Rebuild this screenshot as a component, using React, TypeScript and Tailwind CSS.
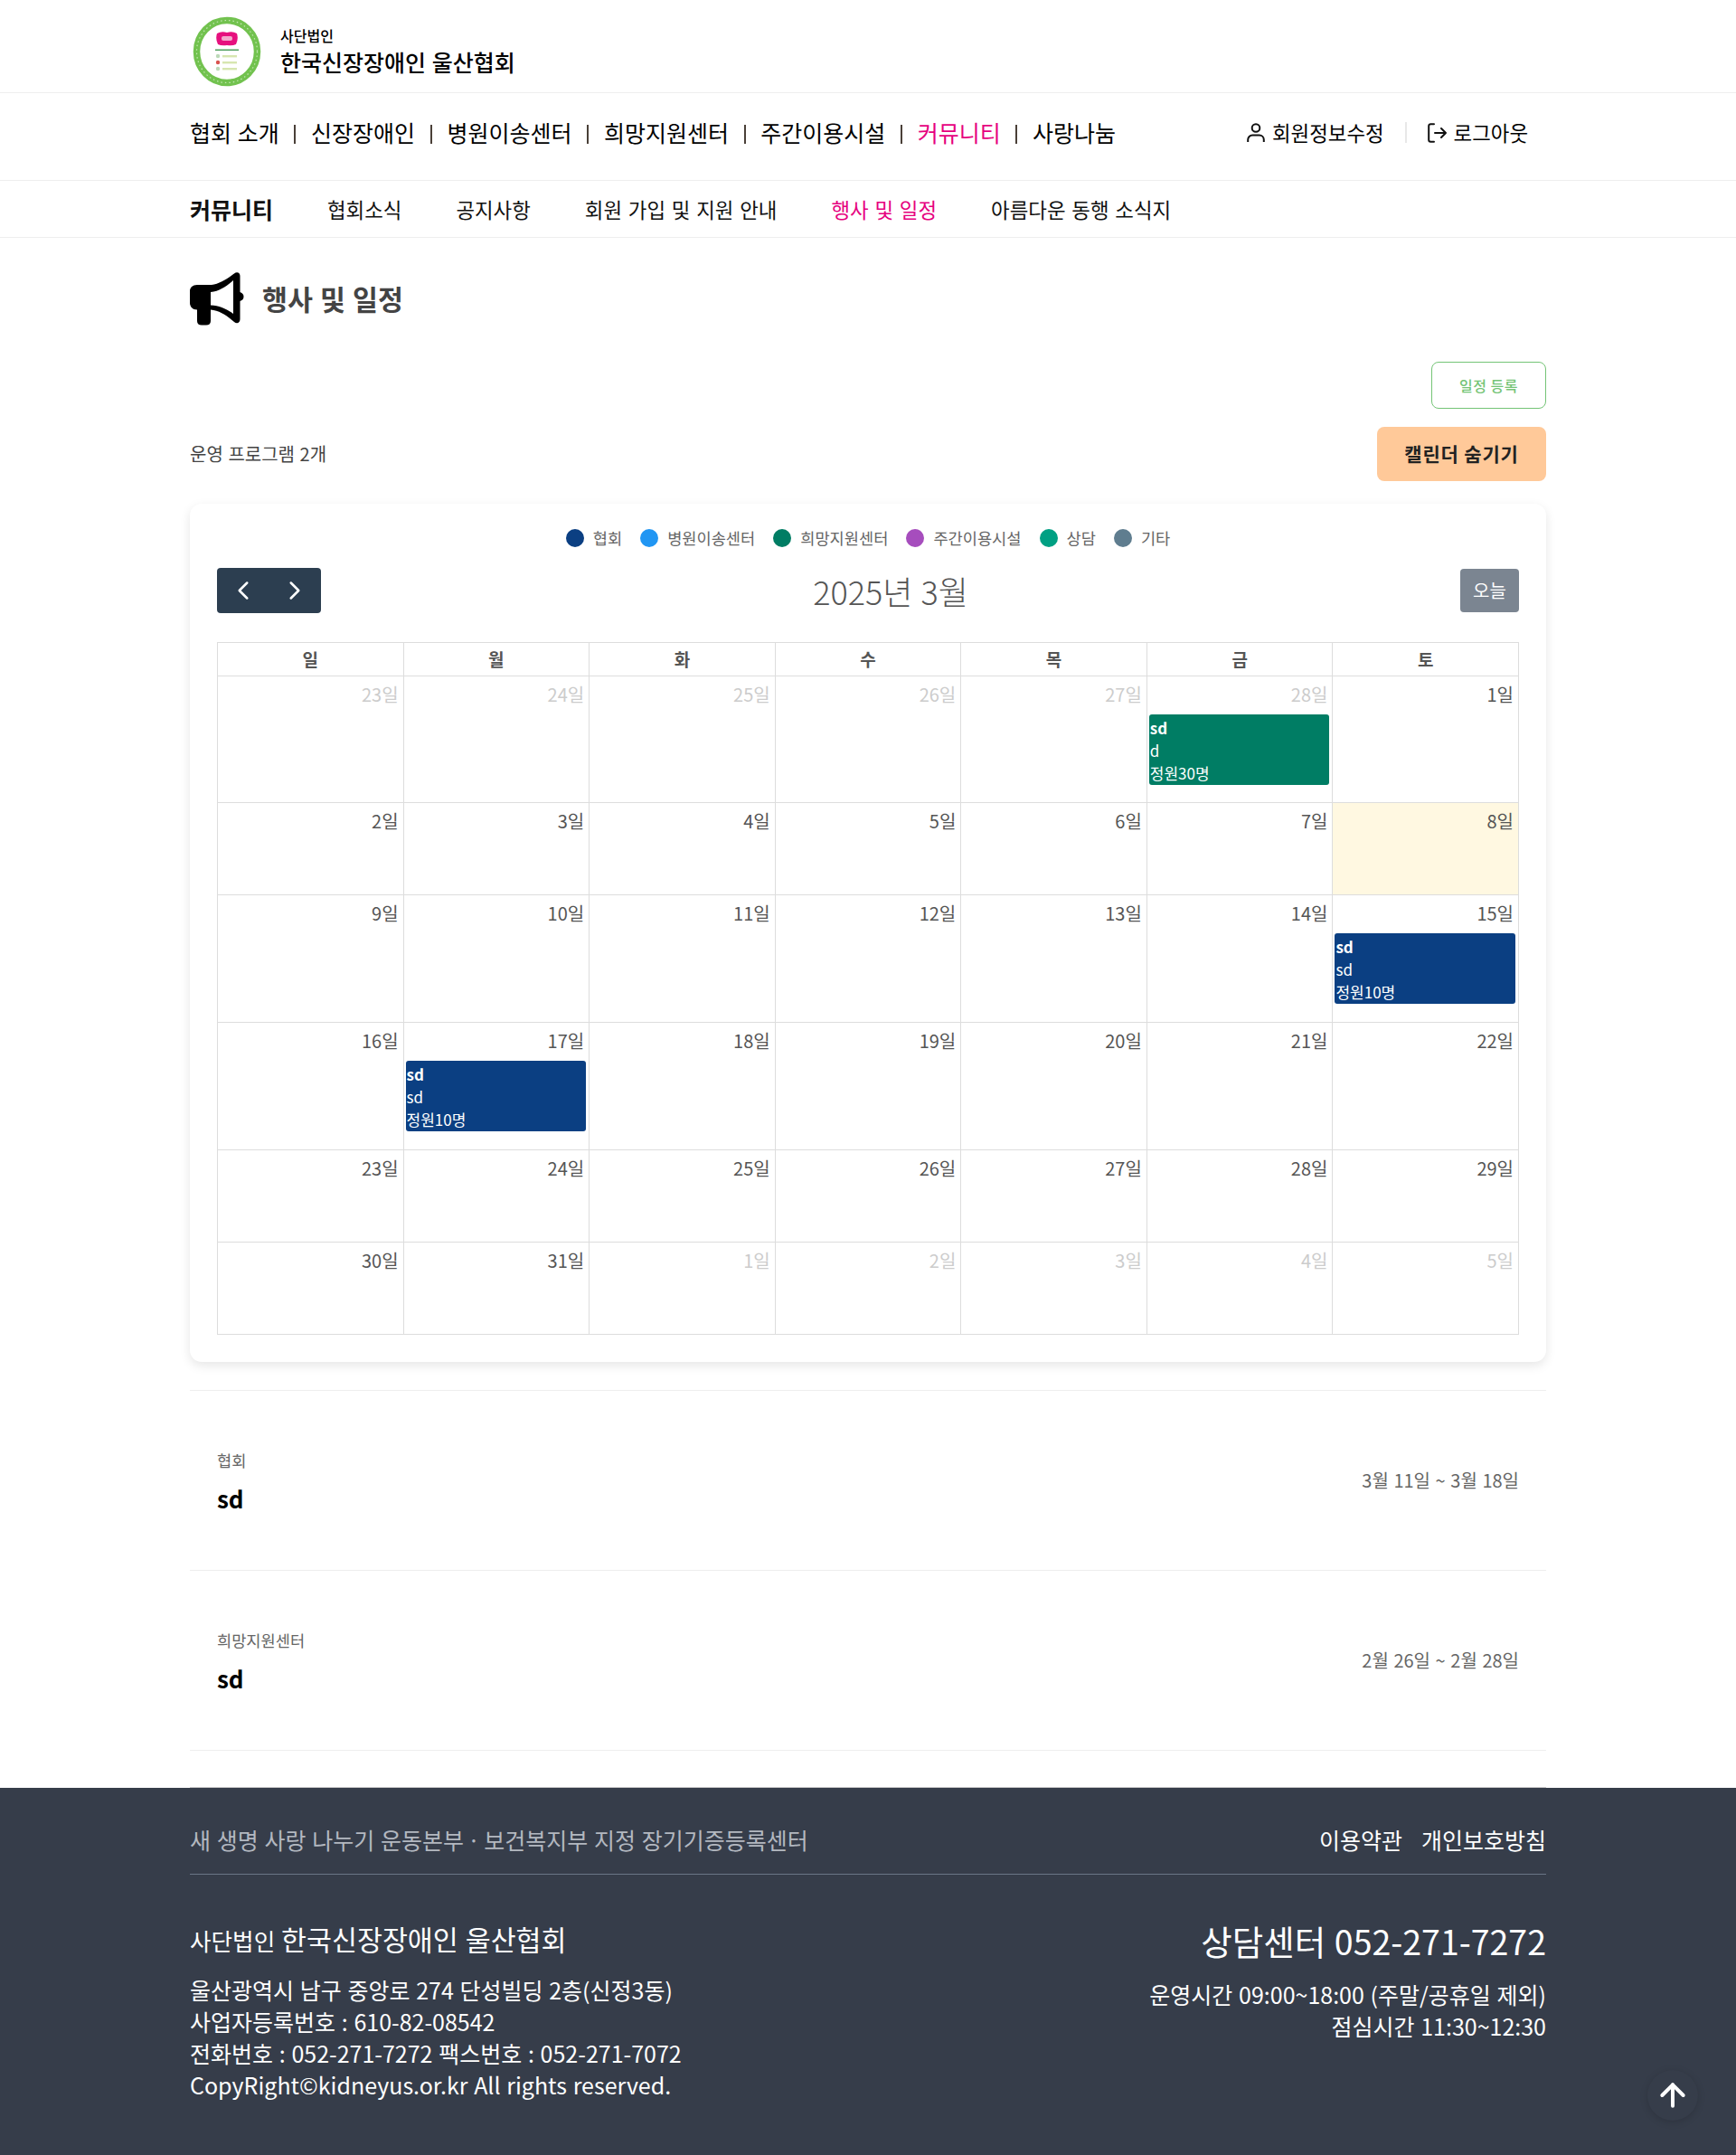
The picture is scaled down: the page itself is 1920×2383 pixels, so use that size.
import React from "react";
import { ChevronLeft, ChevronRight, ArrowUp } from "lucide-react";

const F = { fontFamily: '"Noto Sans CJK KR", "Noto Sans", sans-serif' };

const nav = ["협회 소개", "신장장애인", "병원이송센터", "희망지원센터", "주간이용시설", "커뮤니티", "사랑나눔"];
const sub = ["협회소식", "공지사항", "회원 가입 및 지원 안내", "행사 및 일정", "아름다운 동행 소식지"];
const legend: [string, string][] = [
  ["협회", "bg-[#0b3f82]"],
  ["병원이송센터", "bg-[#2196f3]"],
  ["희망지원센터", "bg-[#007d64]"],
  ["주간이용시설", "bg-[#a64dbd]"],
  ["상담", "bg-[#00a083]"],
  ["기타", "bg-[#5f7d8f]"],
];
type Ev = { title: string; body: string; cap: string; color: string };
const navy = "bg-[#0b3f82]";
const weeks: { d: string; muted?: boolean; today?: boolean; ev?: Ev }[][] = [
  [
    { d: "23일", muted: true }, { d: "24일", muted: true }, { d: "25일", muted: true }, { d: "26일", muted: true }, { d: "27일", muted: true },
    { d: "28일", muted: true, ev: { title: "sd", body: "d", cap: "정원30명", color: "bg-[#007d64]" } },
    { d: "1일" },
  ],
  [{ d: "2일" }, { d: "3일" }, { d: "4일" }, { d: "5일" }, { d: "6일" }, { d: "7일" }, { d: "8일", today: true }],
  [{ d: "9일" }, { d: "10일" }, { d: "11일" }, { d: "12일" }, { d: "13일" }, { d: "14일" }, { d: "15일", ev: { title: "sd", body: "sd", cap: "정원10명", color: navy } }],
  [{ d: "16일" }, { d: "17일", ev: { title: "sd", body: "sd", cap: "정원10명", color: navy } }, { d: "18일" }, { d: "19일" }, { d: "20일" }, { d: "21일" }, { d: "22일" }],
  [{ d: "23일" }, { d: "24일" }, { d: "25일" }, { d: "26일" }, { d: "27일" }, { d: "28일" }, { d: "29일" }],
  [{ d: "30일" }, { d: "31일" }, { d: "1일", muted: true }, { d: "2일", muted: true }, { d: "3일", muted: true }, { d: "4일", muted: true }, { d: "5일", muted: true }],
];
const rowH = ["h-[140px]", "h-[102px]", "h-[141px]", "h-[141px]", "h-[102px]", "h-[102px]"];

function Logo() {
  return (
    <svg width="80" height="80" viewBox="0 0 80 80" className="shrink-0">
      <ellipse cx="41" cy="40" rx="33.5" ry="34.5" fill="#fff" stroke="#72c24f" strokeWidth="7.5" />
      <ellipse cx="41" cy="40" rx="33.5" ry="34.5" fill="none" stroke="#c4e8b4" strokeWidth="1.2" strokeDasharray="1.5 3" />
      <path d="M30 20q5-3 11-1q6-2 11 1q2 6-1 12q-4 2-10 1q-6 1-10-1q-3-6-1-12z" fill="#e6107e" />
      <rect x="35" y="23" width="12" height="5" rx="2" fill="#f3a8cc" />
      <rect x="28" y="37.5" width="26" height="1.5" fill="#4f9e5c" />
      <circle cx="31" cy="45" r="2.2" fill="#bcd9b8" />
      <rect x="36" y="44" width="16" height="2.4" fill="#d7e6b0" />
      <circle cx="31" cy="52" r="2.2" fill="#d9534f" />
      <rect x="36" y="51" width="16" height="2.4" fill="#d7e6b0" />
      <circle cx="31" cy="59" r="2.2" fill="#bcd9b8" />
      <rect x="36" y="58" width="16" height="2.4" fill="#d7e6b0" />
    </svg>
  );
}

function Speaker() {
  return (
    <svg width="60" height="60" viewBox="0 0 60 60" className="shrink-0">
      <path
        fillRule="evenodd"
        fill="#000"
        d="M8 15H24C33 14 42 8 49 2.5C52 0 55.5 1.5 55.5 5V23C58.5 24 59.5 26 59.5 28C59.5 30 58.5 32 55.5 33V53C55.5 57 52 58.5 49 56C42 50 33 43 23 42.5V55C23 58 21 59.5 18 59.5H13C10 59.5 8 58 8 55V42.5C3 42.5 0 39 0 35V22C0 18 3 15 8 15ZM23 23V37.5C33 38 41 42 48 47V10C41 16 33 22 23 23Z"
      />
    </svg>
  );
}

function UserIcon() {
  return (
    <svg width="20" height="21" viewBox="0 0 20 21" fill="none" stroke="#111" strokeWidth="2" className="mr-[8px] shrink-0">
      <circle cx="10" cy="5.5" r="4.3" />
      <path d="M1.2 21v-2.5a5 5 0 0 1 5-5h7.6a5 5 0 0 1 5 5V21" />
    </svg>
  );
}

function LogoutIcon() {
  return (
    <svg width="21" height="22" viewBox="0 0 21 22" fill="none" stroke="#111" strokeWidth="2" strokeLinecap="round" strokeLinejoin="round" className="mr-[8px] shrink-0">
      <path d="M7 1.2H3.2a2 2 0 0 0-2 2v15.6a2 2 0 0 0 2 2H7" />
      <path d="M8 11h12M15 6l5 5-5 5" />
    </svg>
  );
}

function Listing({ cat, title, date }: { cat: string; title: string; date: string }) {
  return (
    <div className="flex h-[199px] items-center justify-between border-b border-[#eeeeee] px-[30px]">
      <div className="pt-[4px]">
        <div className="text-[17.6px] leading-[24px] text-[#666666]">{cat}</div>
        <div className="mt-[12px] text-[26px] font-bold leading-[36px] text-[#000000]">{title}</div>
      </div>
      <div className="text-[20px] text-[#666666]">{date}</div>
    </div>
  );
}

export default function App() {
  return (
    <div style={F} className="w-full bg-white text-[#111] [word-spacing:0.07em]">
      <header className="h-[103px] border-b border-[#eeeeee] pt-[12px]">
        <div className="mx-auto flex h-full w-[1500px] items-center">
          <Logo />
          <div className="ml-[20px]">
            <div className="text-[16px] font-medium leading-[22px] text-black">사단법인</div>
            <div className="text-[25px] font-medium leading-[36px] text-black">한국신장장애인 울산협회</div>
          </div>
        </div>
      </header>
      <div className="h-[97px] border-b border-[#eeeeee] pb-[8px]">
        <div className="mx-auto flex h-full w-[1500px] items-center justify-between">
          <nav className="flex items-center text-[25px]">
            {nav.map((n, i) => (
              <React.Fragment key={n}>
                {i > 0 && <span className="mx-[16.7px] mt-[2px] h-[21px] w-[2px] bg-[#4a4038]" />}
                <span className={i === 5 ? "text-[#e6007e]" : "text-black"}>{n}</span>
              </React.Fragment>
            ))}
          </nav>
          <div className="mr-[20px] flex items-center text-[22.4px] text-black">
            <UserIcon />
            <span>회원정보수정</span>
            <span className="mx-[23px] h-[23px] w-[2px] bg-[#e8e8e8]" />
            <LogoutIcon />
            <span>로그아웃</span>
          </div>
        </div>
      </div>
      <div className="h-[63px] border-b border-[#eeeeee] pt-[1px]">
        <div className="mx-auto flex h-full w-[1500px] items-center text-[22.4px]">
          <span className="mr-[60px] text-[25px] font-bold">커뮤니티</span>
          <div className="flex gap-[60px] [word-spacing:0.08em]">
            {sub.map((s, i) => (
              <span key={s} className={i === 3 ? "text-[#e6007e]" : "text-[#111]"}>{s}</span>
            ))}
          </div>
        </div>
      </div>

      <main className="mx-auto w-[1500px]">
        <div className="flex h-[137px] items-start pt-[37px]">
          <Speaker />
          <h1 className="ml-[20px] mt-[8px] text-[30.4px] font-bold leading-[44px] text-[#444444]">행사 및 일정</h1>
        </div>
        <div className="flex justify-end">
          <button className="h-[52px] w-[127px] rounded-[8px] border border-[#74c476] text-[16px] font-medium tracking-[0.5px] text-[#74c476]">일정 등록</button>
        </div>
        <div className="mt-[20px] flex items-center justify-between">
          <span className="text-[20px] text-[#444444]">운영 프로그램 2개</span>
          <button className="h-[60px] w-[187px] rounded-[8px] bg-[#ffc999] text-[21px] font-bold tracking-[0.8px] text-[#222222]">캘린더 숨기기</button>
        </div>

        <section className="mt-[25px] rounded-[13px] bg-white px-[30px] pb-[30px] pt-[25px] shadow-[0_4px_12px_rgba(0,0,0,0.1)]">
          <div className="flex items-center justify-center gap-[20px] text-[17.6px] text-[#666666]">
            {legend.map(([l, c]) => (
              <div key={l} className="flex items-center gap-[10px]">
                <span className={`h-[20px] w-[20px] rounded-full ${c}`} />
                <span>{l}</span>
              </div>
            ))}
          </div>
          <div className="mt-[20px] flex h-[50px] items-center justify-between">
            <div className="flex h-[50px] w-[115px] items-center justify-around rounded-[4px] bg-[#2c3e50] text-white">
              <ChevronLeft size={34} strokeWidth={1.8} />
              <ChevronRight size={34} strokeWidth={1.8} />
            </div>
            <div className="text-[36px] font-light text-[#555555]">2025년 3월</div>
            <button className="h-[48px] w-[65px] rounded-[4px] bg-[#7b8591] text-[20px] text-white">오늘</button>
          </div>
          <div className="mt-[32px] border-l border-t border-[#dddddd]">
            <div className="grid h-[37px] grid-cols-7">
              {["일", "월", "화", "수", "목", "금", "토"].map((d) => (
                <div key={d} className="flex items-center justify-center border-b border-r border-[#dddddd] text-[19px] font-bold text-[#555555]">{d}</div>
              ))}
            </div>
            {weeks.map((w, i) => (
              <div key={i} className={`grid grid-cols-7 ${rowH[i]}`}>
                {w.map((c, j) => (
                  <div key={j} className={`border-b border-r border-[#dddddd] ${c.today ? "bg-[#fff8e1]" : ""}`}>
                    <div className={`pr-[5px] pt-[6px] text-right text-[20px] leading-[28px] ${c.muted ? "text-[#cccccc]" : "text-[#555555]"}`}>{c.d}</div>
                    {c.ev && (
                      <div className={`ml-[2px] mr-[3px] mt-[8px] h-[78px] rounded-[3px] px-[1px] pt-[2px] text-[17px] leading-[25px] text-white ${c.ev.color}`}>
                        <div className="font-bold">{c.ev.title}</div>
                        <div>{c.ev.body}</div>
                        <div>{c.ev.cap}</div>
                      </div>
                    )}
                  </div>
                ))}
              </div>
            ))}
          </div>
        </section>

        <div className="mt-[31px] border-t border-[#eeeeee]">
          <Listing cat="협회" title="sd" date="3월 11일 ~ 3월 18일" />
          <Listing cat="희망지원센터" title="sd" date="2월 26일 ~ 2월 28일" />
        </div>
        <div className="mt-[40px] h-px bg-[#cccccc]" />
      </main>

      <footer className="relative h-[406px] bg-[#363d4a] text-white">
        <div className="mx-auto w-[1500px]">
          <div className="flex h-[96px] items-center justify-between border-b border-[#6b7686] pt-[20px] text-[25px]">
            <span className="text-[#b3b8c0]">새 생명 사랑 나누기 운동본부 <span className="mx-[-2.5px]">·</span> 보건복지부 지정 장기기증등록센터</span>
            <div className="flex gap-[21px]">
              <span>이용약관</span>
              <span>개인보호방침</span>
            </div>
          </div>
          <div className="flex justify-between pt-[50px]">
            <div>
              <div className="text-[25.6px] leading-[42px]">사단법인 <span className="text-[30.4px]">한국신장장애인 울산협회</span></div>
              <div className="mt-[16px] text-[25px] leading-[35px]">
                <div>울산광역시 남구 중앙로 274 단성빌딩 2층(신정3동)</div>
                <div>사업자등록번호 : 610-82-08542</div>
                <div>전화번호 : 052-271-7272 팩스번호 : 052-271-7072</div>
                <div>CopyRight©kidneyus.or.kr All rights reserved.</div>
              </div>
            </div>
            <div className="text-right">
              <div className="-mt-[1px] text-[37.5px] leading-[48px]">상담센터 052-271-7272</div>
              <div className="mt-[18px] text-[25px] leading-[35px]">
                <div>운영시간 09:00~18:00 (주말/공휴일 제외)</div>
                <div>점심시간 11:30~12:30</div>
              </div>
            </div>
          </div>
        </div>
        <div className="absolute bottom-[38px] right-[42px] flex h-[56px] w-[56px] items-center justify-center rounded-full bg-[#363d4a] shadow-[0_2px_8px_rgba(0,0,0,0.15)]">
          <ArrowUp size={40} strokeWidth={2.4} />
        </div>
      </footer>
    </div>
  );
}
